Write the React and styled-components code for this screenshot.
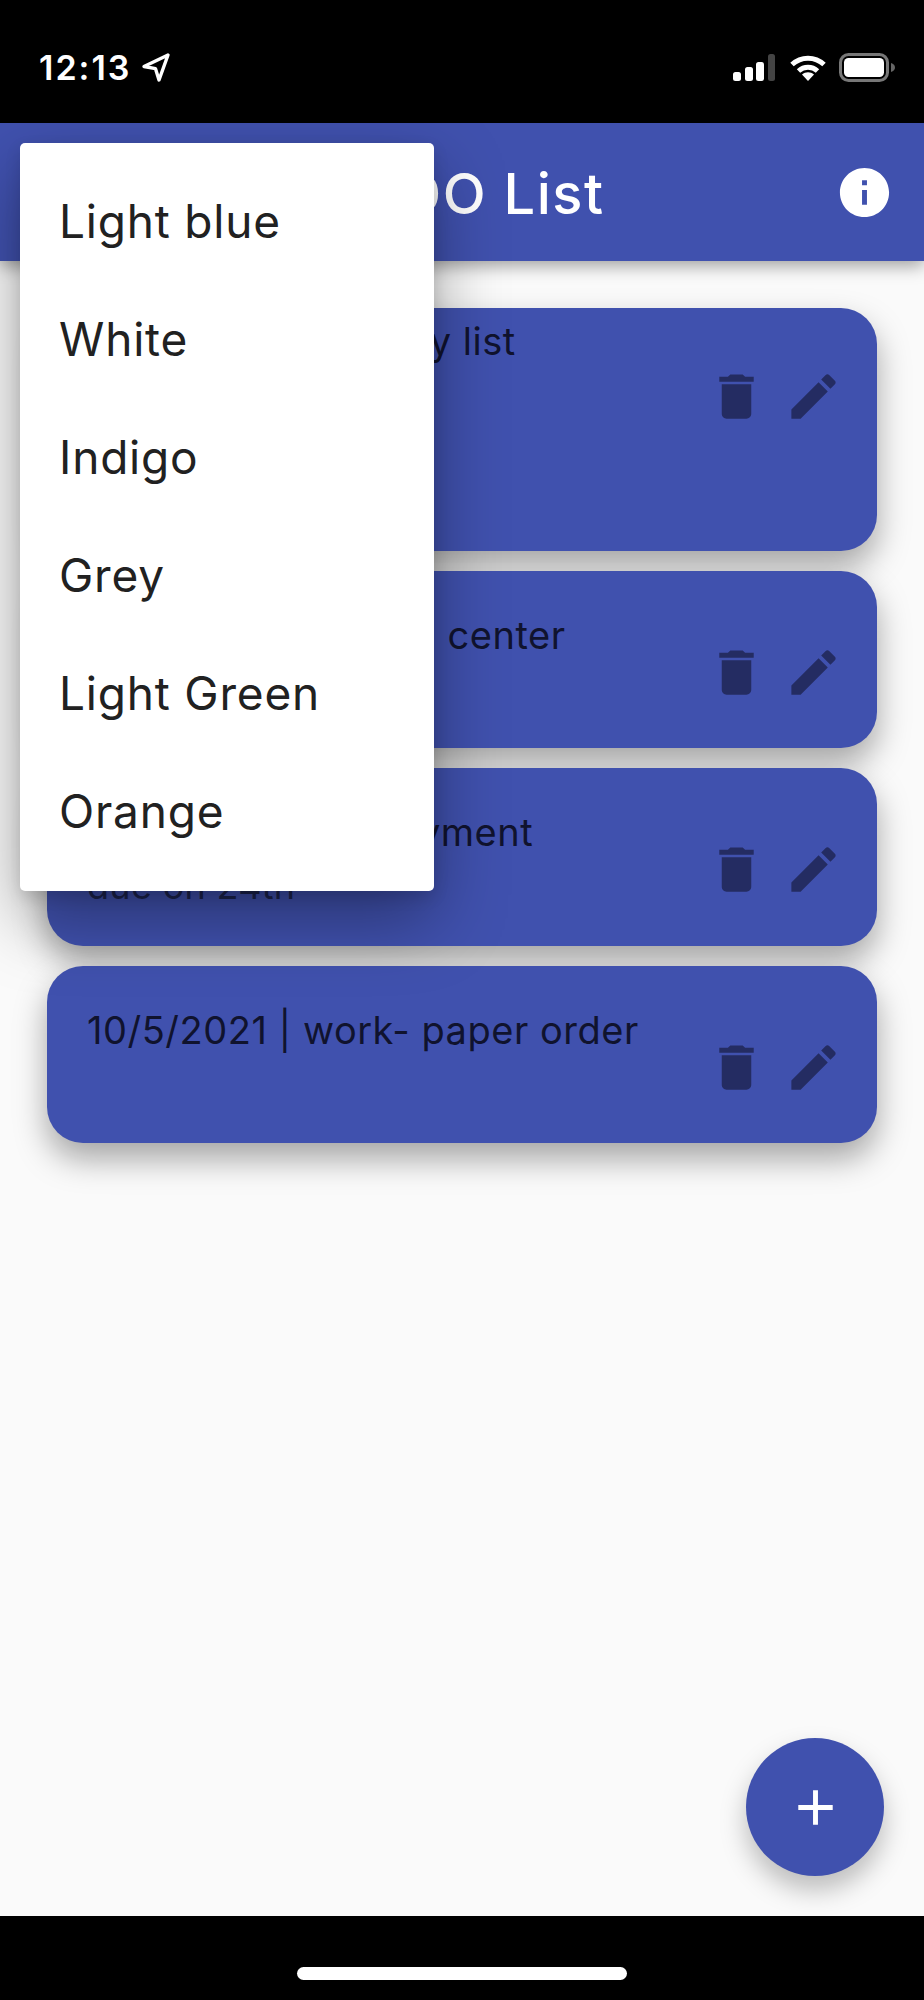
import React from 'react';
import styled, { createGlobalStyle } from 'styled-components';

const Global = createGlobalStyle`
  html, body { margin: 0; padding: 0; background: #fafafa; }
  * { box-sizing: border-box; }
`;

const Phone = styled.div`
  position: relative;
  width: 924px;
  height: 2000px;
  display: flex;
  flex-direction: column;
  overflow: hidden;
  font-family: Inter, "Liberation Sans", sans-serif;
  background: #fafafa;
`;

const StatusBar = styled.div`
  height: 123px;
  flex: none;
  background: #000;
  display: flex;
  align-items: flex-start;
  justify-content: space-between;
  padding: 52px 28px 0 39px;
  color: #fff;
`;

const StatusGroup = styled.div`
  display: flex;
  align-items: center;
  gap: ${p => p.$gap}px;
  height: 31px;
`;

const Clock = styled.span`
  font-weight: 600;
  font-size: 34px;
  line-height: 31px;
  letter-spacing: 2px;
`;

const AppBar = styled.header`
  position: relative;
  z-index: 2;
  height: 138px;
  flex: none;
  background: #4051ae;
  display: flex;
  align-items: center;
  justify-content: space-between;
  padding: 0 30px 0 320px;
  box-shadow: 0 5px 16px rgba(0, 0, 0, 0.36);
  color: #fff;
`;

const Title = styled.h1`
  margin: 0;
  padding-top: 3px;
  font-size: 56px;
  font-weight: 500;
  line-height: 66px;
  letter-spacing: 1.5px;
`;

const Main = styled.main`
  flex: 1;
  display: flex;
  flex-direction: column;
  gap: 20px;
  padding: 47px 47px 0;
  background: #fafafa;
`;

const Card = styled.article`
  min-height: ${p => p.$height}px;
  background: #4051ae;
  border-radius: 36px;
  display: flex;
  justify-content: space-between;
  align-items: flex-start;
  padding: 0 34px 0 40px;
  box-shadow: 0 16px 32px rgba(0, 0, 0, 0.34);
`;

const CardText = styled.div`
  padding-top: ${p => p.$top}px;
  color: #10132e;
  font-size: 38px;
  line-height: 54px;
  letter-spacing: 0.52px;
`;

const Subtitle = styled.div`
  color: #1d2450;
  font-size: 36px;
  line-height: 54px;
  letter-spacing: 0.3px;
`;

const Actions = styled.div`
  display: flex;
  gap: 18px;
  margin-top: ${p => p.$top}px;
  color: #242c62;
`;

const Menu = styled.ul`
  position: absolute;
  z-index: 5;
  left: 20px;
  top: 143px;
  width: 414px;
  margin: 0;
  padding: 20px 0;
  list-style: none;
  background: #fff;
  border-radius: 5px;
  box-shadow: 0 28px 70px rgba(0, 0, 0, 0.36), 0 6px 16px rgba(0, 0, 0, 0.12);
`;

const MenuItem = styled.li`
  height: 118px;
  display: flex;
  align-items: center;
  padding: 0 0 2px 39px;
  color: #212121;
  font-size: 46px;
  letter-spacing: 0.8px;
`;

const Fab = styled.button`
  position: absolute;
  left: 746px;
  top: 1738px;
  width: 138px;
  height: 138px;
  padding: 0;
  border: none;
  border-radius: 50%;
  background: #4051ae;
  color: #fff;
  display: flex;
  align-items: center;
  justify-content: center;
  box-shadow: 0 14px 26px rgba(0, 0, 0, 0.25);
`;

const BottomBar = styled.footer`
  position: relative;
  z-index: 3;
  height: 84px;
  flex: none;
  background: #000;
  display: flex;
  justify-content: center;
  padding-top: 51px;
`;

const HomeIndicator = styled.div`
  width: 330px;
  height: 13px;
  border-radius: 7px;
  background: #fff;
`;

const Icon = ({ d, size = 59 }) => (
  <svg width={size} height={size} viewBox="0 0 24 24" fill="currentColor" style={{ display: 'block' }}>
    <path d={d} />
  </svg>
);

const TRASH = 'M6 19c0 1.1.9 2 2 2h8c1.1 0 2-.9 2-2V7H6v12zM19 4h-3.5l-1-1h-5l-1 1H5v2h14V4z';
const PENCIL = 'M3 17.25V21h3.75L17.81 9.94l-3.75-3.75L3 17.25zM20.71 7.04c.39-.39.39-1.02 0-1.41l-2.34-2.34c-.39-.39-1.02-.39-1.41 0l-1.83 1.83 3.75 3.75 1.83-1.83z';
const INFO = 'M12 2C6.48 2 2 6.48 2 12s4.48 10 10 10 10-4.48 10-10S17.52 2 12 2zm1 15h-2v-6h2v6zm0-8h-2V7h2v2z';
const ADD = 'M19 13h-6v6h-2v-6H5v-2h6V5h2v6h6v2z';

const LocationArrow = () => (
  <svg width="30" height="31" viewBox="0 0 30 31" fill="none" stroke="#fff" strokeWidth="3.4" strokeLinejoin="round">
    <path d="M27 3 3 14.5l11.5 2.2L18 28z" />
  </svg>
);

const Signal = () => (
  <svg width="44" height="28" viewBox="0 0 44 28" style={{ display: 'block' }}>
    <rect x="0" y="18" width="8" height="9" rx="2.5" fill="#fff" />
    <rect x="12" y="13" width="8" height="14" rx="2.5" fill="#fff" />
    <rect x="23" y="8" width="8" height="19" rx="2.5" fill="#fff" />
    <rect x="35" y="0" width="7" height="27" rx="2.5" fill="#444" />
  </svg>
);

const Wifi = () => (
  <svg width="38" height="27" viewBox="0 0 38 27" fill="none" stroke="#fff" strokeWidth="5" style={{ display: 'block' }}>
    <path d="M3 10.5C12 2 26 2 35 10.5" />
    <path d="M9.5 17c5.500-5 13.500-5 19 0" />
    <path d="M19 27l-6-6.500c3.500-3 8.500-3 12 0z" fill="#fff" stroke="none" />
  </svg>
);

const Battery = () => (
  <svg width="57" height="29" viewBox="0 0 57 29" style={{ display: 'block' }}>
    <rect x="1.500" y="1.500" width="47" height="26" rx="8" fill="none" stroke="#777" strokeWidth="3" />
    <rect x="5" y="5" width="40" height="19" rx="4.500" fill="#fff" />
    <path d="M52 10c2.500.8 4 2.500 4 4.500s-1.500 3.700-4 4.500z" fill="#666" />
  </svg>
);

const tasks = [
  { text: '10/5/2021 | Grocery list', height: 243, textTop: 6, iconTop: 59 },
  { text: '10/5/2021 | Natural center', height: 177, textTop: 37, iconTop: 72 },
  { text: '10/5/2021 | car payment', sub: 'due on 24th', height: 178, textTop: 37, iconTop: 72 },
  { text: '10/5/2021 | work- paper order', height: 177, textTop: 37, iconTop: 72 },
];

const colours = ['Light blue', 'White', 'Indigo', 'Grey', 'Light Green', 'Orange'];

export default function App() {
  return (
    <Phone>
      <Global />
      <StatusBar>
        <StatusGroup $gap={10}>
          <Clock>12:13</Clock>
          <LocationArrow />
        </StatusGroup>
        <StatusGroup $gap={12}>
          <Signal />
          <Wifi />
          <Battery />
        </StatusGroup>
      </StatusBar>
      <AppBar>
        <Title>TODO List</Title>
        <Icon d={INFO} />
      </AppBar>
      <Main>
        {tasks.map(task => (
          <Card key={task.text} $height={task.height}>
            <CardText $top={task.textTop}>
              {task.text}
              {task.sub && <Subtitle>{task.sub}</Subtitle>}
            </CardText>
            <Actions $top={task.iconTop}>
              <Icon d={TRASH} />
              <Icon d={PENCIL} />
            </Actions>
          </Card>
        ))}
      </Main>
      <BottomBar>
        <HomeIndicator />
      </BottomBar>
      <Menu>
        {colours.map(colour => <MenuItem key={colour}>{colour}</MenuItem>)}
      </Menu>
      <Fab aria-label="Add task"><Icon d={ADD} /></Fab>
    </Phone>
  );
}
